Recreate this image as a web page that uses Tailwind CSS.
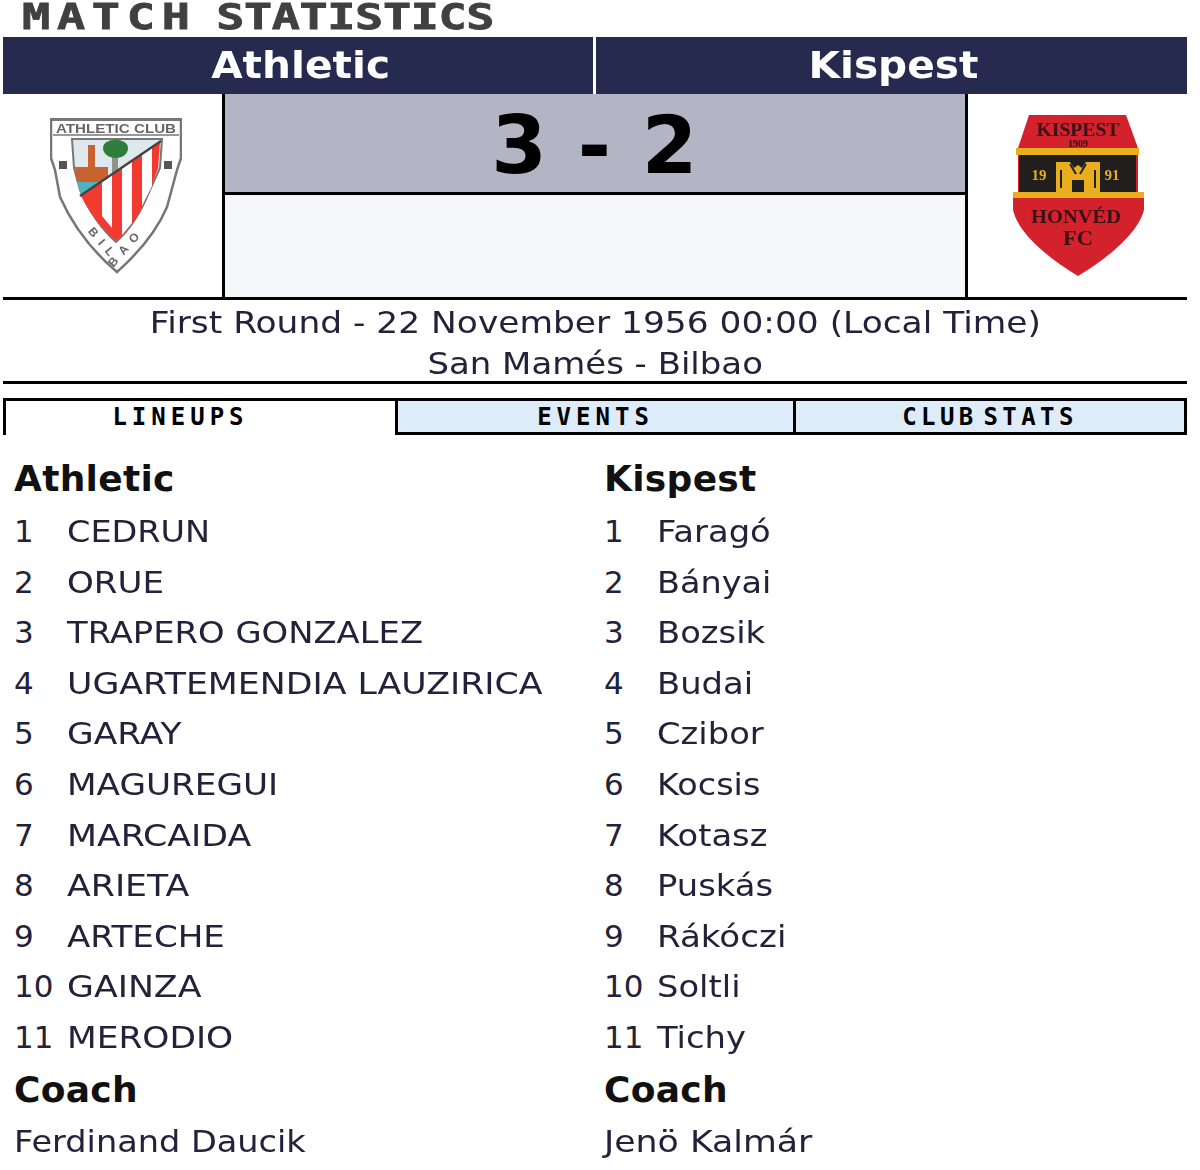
<!DOCTYPE html>
<html lang="en">
<head>
    <meta charset="UTF-8">
    <title>Match Statistics</title>
    <script src="https://cdn.jsdelivr.net/npm/@tailwindcss/browser@4"></script>
</head>
<body class="bg-white font-['DejaVu_Sans',sans-serif] text-[#222] overflow-hidden">
    <div class="w-[1200px] h-[1170px] pl-[3px] pr-[13px]">
        <!-- title -->
        <div class="h-[37px] pl-[19px] pt-[1px]">
            <h1 class="flex w-fit font-['DejaVu_Sans_Mono',monospace] font-bold text-[36px] leading-[32px] text-[#404040] [-webkit-text-stroke:0.8px_#404040] whitespace-nowrap origin-left scale-x-[1.3]">
                <span class="tracking-[5.2px] mr-[15px]">MATCH</span>
                <span class="tracking-[-0.3px]">STATISTICS</span>
            </h1>
        </div>

        <!-- team bar -->
        <div class="flex h-[57px] text-white font-bold text-[38px] leading-[57px]">
            <div class="flex justify-center w-[590px] pl-[5px] bg-[#262a4f]"><span class="scale-x-[1.07]">Athletic</span></div>
            <div class="flex justify-center w-[591px] pl-[3px] ml-[3px] bg-[#262a4f]"><span class="scale-x-[1.07]">Kispest</span></div>
        </div>

        <!-- score block -->
        <div class="flex h-[203px] border-b-[3px] border-black box-content">
            <div class="w-[219px] flex items-center justify-center pl-[7px]">
                <svg width="132" height="156" viewBox="0 0 132 156" class="blur-[0.6px]">
                    <path d="M1 1H131V40L127 52 117 89C106 115 85 138 67 154C48 138 26 115 10 79L5 52 1 40Z" fill="#fff" stroke="#777" stroke-width="2.5"/>
                    <path d="M1 1H131" stroke="#777" stroke-width="4"/>
                    <path d="M3 17H129" stroke="#999" stroke-width="2"/>
                    <text x="66" y="15" text-anchor="middle" font-family="Liberation Sans" font-weight="700" font-size="12.5" fill="#666" textLength="120" lengthAdjust="spacingAndGlyphs">ATHLETIC CLUB</text>
                    <rect x="9" y="43" width="8" height="8" fill="#555"/>
                    <rect x="114" y="43" width="8" height="8" fill="#555"/>
                    <path d="M22 21H112L110 50 100 72C92 92 80 112 66 124C52 112 38 92 30 72L24 50Z" fill="#dde8ef" stroke="#777" stroke-width="2"/>
                    <path d="M38 27H45V49H58V58L50 64H27L25 49H38Z" fill="#c8622f"/>
                    <path d="M27 64H50L31 77Z" fill="#4fb3c0"/>
                    <path d="M62 38H68V56H62Z" fill="#8f9488"/>
                    <path d="M53 30a12 8 0 0 1 25 0c0 7-7 10-12 10s-13-3-13-10Z" fill="#2f7d3a"/>
                    <path d="M31 78L110 24 108 50 100 72C92 92 80 112 66 123C52 112 38 92 31 78Z" fill="#f23a30"/>
                    <path d="M52 63L62 56V110L52 98ZM72 49L82 42V105L72 117ZM92 36L102 29V68L92 88Z" fill="#fff"/>
                    <path d="M30 78L111 23" stroke="#444" stroke-width="2.5"/>
                    <path id="bilbao-arc" d="M14 86L66 147 118 86" fill="none"/>
                    <text font-family="Liberation Sans" font-weight="700" font-size="12" fill="#666" letter-spacing="7" text-anchor="middle"><textPath href="#bilbao-arc" startOffset="50%">BILBAO</textPath></text>
                </svg>
            </div>
            <div class="w-[746px] border-x-[3px] border-black bg-[#f5f7fb]">
                <div class="h-[101px] pt-[3px] border-b-[3px] border-black bg-[#b3b5c4] text-center text-[#000] font-bold text-[80px] tracking-[1.5px] leading-[98px]">3 - 2</div>
            </div>
            <div class="w-[219px] flex items-center justify-center">
                <svg width="132" height="163" viewBox="0 0 132 163" class="blur-[0.6px]">
                    <path d="M17 1H114L126 34V78L132 84V96C125 122 92 146 66 162C40 146 7 122 1 96V84L6 78V34Z" fill="#d3222b"/>
                    <rect x="7" y="41" width="117" height="37" fill="#201f1e"/>
                    <rect x="4" y="34" width="123" height="7" fill="#e8ae1e"/>
                    <rect x="1" y="78" width="131" height="6" fill="#e8ae1e"/>
                    <path d="M44 48H58L62 54 66 51 70 54 74 48H88V78H72V66H60V78H44Z" fill="#e8ae1e"/>
                    <path d="M58 50L64 60M74 50L68 60M49 56V74M83 56V74" stroke="#201f1e" stroke-width="2" fill="none"/>
                    <text x="66" y="22" text-anchor="middle" font-family="Liberation Serif" font-weight="700" font-size="19" fill="#3a1116" textLength="83" lengthAdjust="spacingAndGlyphs">KISPEST</text>
                    <text x="66" y="33" text-anchor="middle" font-family="Liberation Serif" font-weight="700" font-size="10" fill="#3a1116">1909</text>
                    <text x="27" y="66" text-anchor="middle" font-family="Liberation Serif" font-weight="700" font-size="15" fill="#e8ae1e">19</text>
                    <text x="100" y="66" text-anchor="middle" font-family="Liberation Serif" font-weight="700" font-size="15" fill="#e8ae1e">91</text>
                    <text x="64" y="109" text-anchor="middle" font-family="Liberation Serif" font-weight="700" font-size="18" fill="#3a1116" textLength="90" lengthAdjust="spacingAndGlyphs">HONVÉD</text>
                    <text x="66" y="131" text-anchor="middle" font-family="Liberation Serif" font-weight="700" font-size="20" fill="#3a1116" textLength="30" lengthAdjust="spacingAndGlyphs">FC</text>
                </svg>
            </div>
        </div>

        <!-- match info -->
        <div class="h-[84px] pt-[2px] border-b-[3px] border-black text-[31px] leading-[40.5px] text-[#22223a]">
            <div class="w-fit mx-auto scale-x-[1.11]">First Round - 22 November 1956 00:00 (Local Time)</div>
            <div class="w-fit mx-auto scale-x-[1.095]">San Mamés - Bilbao</div>
        </div>

        <!-- tabs -->
        <div class="flex mt-[14px] h-[37px] font-['DejaVu_Sans_Mono',monospace] font-bold text-[24px] tracking-[5px] leading-[32px] text-center text-black">
            <div class="w-[392px] pr-[40px] border-t-[3px] border-l-[3px] border-black">LINEUPS</div>
            <div class="w-[398px] border-[3px] border-r-0 border-black bg-[#deecfa]">EVENTS</div>
            <div class="w-[394px] border-[3px] border-black bg-[#deecfa] tracking-[4.4px] [word-spacing:-13px]">CLUB STATS</div>
        </div>

        <!-- lineups -->
        <div class="grid grid-cols-[590px_1fr] pl-[11px] pt-[21px] text-[31px] leading-[50.6px] text-[#22223a]">
            <div>
                <h2 class="font-bold text-[36px] tracking-[0.3px] leading-[46px] text-[#111]">Athletic</h2>
                <ol class="mt-[4px]">
                    <li class="flex"><span class="w-[53px]">1</span><span class="origin-left scale-x-[1.08]">CEDRUN</span></li>
                    <li class="flex"><span class="w-[53px]">2</span><span class="origin-left scale-x-[1.1]">ORUE</span></li>
                    <li class="flex"><span class="w-[53px]">3</span><span class="origin-left scale-x-[1.09]">TRAPERO GONZALEZ</span></li>
                    <li class="flex"><span class="w-[53px]">4</span><span class="origin-left scale-x-[1.12]">UGARTEMENDIA LAUZIRICA</span></li>
                    <li class="flex"><span class="w-[53px]">5</span><span class="origin-left scale-x-[1.11]">GARAY</span></li>
                    <li class="flex"><span class="w-[53px]">6</span><span class="origin-left scale-x-[1.105]">MAGUREGUI</span></li>
                    <li class="flex"><span class="w-[53px]">7</span><span class="origin-left scale-x-[1.12]">MARCAIDA</span></li>
                    <li class="flex"><span class="w-[53px]">8</span><span class="origin-left scale-x-[1.12]">ARIETA</span></li>
                    <li class="flex"><span class="w-[53px]">9</span><span class="origin-left scale-x-[1.1]">ARTECHE</span></li>
                    <li class="flex"><span class="w-[53px]">10</span><span class="origin-left scale-x-[1.12]">GAINZA</span></li>
                    <li class="flex"><span class="w-[53px]">11</span><span class="origin-left scale-x-[1.11]">MERODIO</span></li>
                </ol>
                <h2 class="font-bold text-[36px] tracking-[0.3px] leading-[54px] text-[#111]">Coach</h2>
                <p class="-mt-[1px] w-fit origin-left scale-x-[1.082]">Ferdinand Daucik</p>
            </div>
            <div>
                <h2 class="font-bold text-[36px] tracking-[0.3px] leading-[46px] text-[#111]">Kispest</h2>
                <ol class="mt-[4px]">
                    <li class="flex"><span class="w-[53px]">1</span><span class="origin-left scale-x-[1.09]">Faragó</span></li>
                    <li class="flex"><span class="w-[53px]">2</span><span class="origin-left scale-x-[1.08]">Bányai</span></li>
                    <li class="flex"><span class="w-[53px]">3</span><span class="origin-left scale-x-[1.09]">Bozsik</span></li>
                    <li class="flex"><span class="w-[53px]">4</span><span class="origin-left scale-x-[1.09]">Budai</span></li>
                    <li class="flex"><span class="w-[53px]">5</span><span class="origin-left scale-x-[1.09]">Czibor</span></li>
                    <li class="flex"><span class="w-[53px]">6</span><span class="origin-left scale-x-[1.08]">Kocsis</span></li>
                    <li class="flex"><span class="w-[53px]">7</span><span class="origin-left scale-x-[1.09]">Kotasz</span></li>
                    <li class="flex"><span class="w-[53px]">8</span><span class="origin-left scale-x-[1.09]">Puskás</span></li>
                    <li class="flex"><span class="w-[53px]">9</span><span class="origin-left scale-x-[1.1]">Rákóczi</span></li>
                    <li class="flex"><span class="w-[53px]">10</span><span class="origin-left scale-x-[1.09]">Soltli</span></li>
                    <li class="flex"><span class="w-[53px]">11</span><span class="origin-left scale-x-[1.09]">Tichy</span></li>
                </ol>
                <h2 class="font-bold text-[36px] tracking-[0.3px] leading-[54px] text-[#111]">Coach</h2>
                <p class="-mt-[1px] w-fit origin-left scale-x-[1.12]">Jenö Kalmár</p>
            </div>
        </div>
    </div>
</body>
</html>
